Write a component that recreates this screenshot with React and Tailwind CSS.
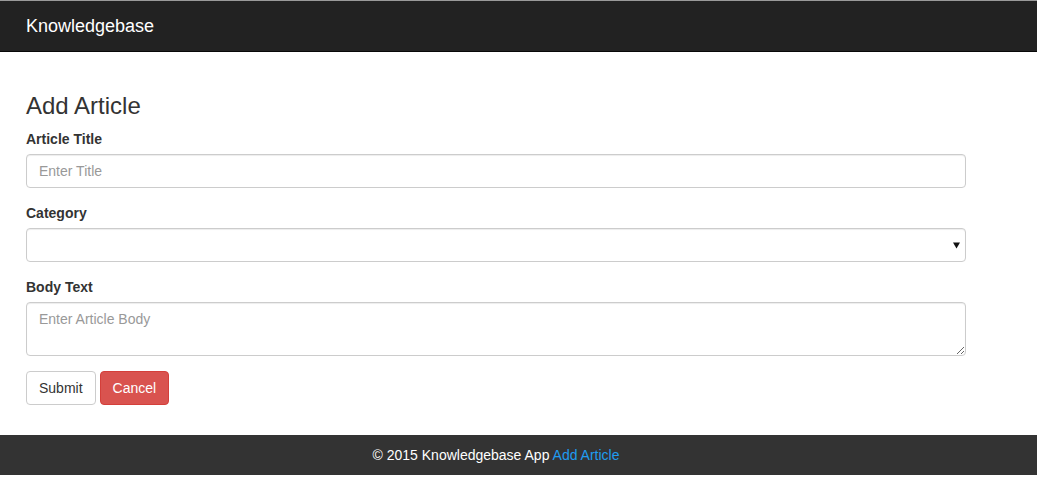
import React from 'react';

const font = { fontFamily: '"Liberation Sans", Arial, sans-serif' };

const FormGroup = ({ label, children }) => (
  <div className="mb-[15px]">
    <label className="block mb-[5px] text-[14px] leading-[20px] font-bold text-[#333]">{label}</label>
    {children}
  </div>
);

const inputClass =
  'block w-full h-[34px] px-[12px] py-[6px] text-[14px] leading-[20px] text-[#555] bg-white border border-[#ccc] rounded-[4px] shadow-[inset_0_1px_1px_rgba(0,0,0,0.075)] placeholder:text-[#999] outline-none';

export default function App() {
  return (
    <div className="min-h-[478px] bg-white text-[#333]" style={font}>
      {/* Navbar */}
      <nav className="bg-[#222] border-t border-t-[#9a9a9a] border-b border-b-[#080808]">
        <div className="mx-[26px] h-[50px] flex items-center">
          <span className="text-[18px] leading-[20px] text-white">Knowledgebase</span>
        </div>
      </nav>

      {/* Main */}
      <main className="w-[940px] ml-[26px] pt-[41px]">
        <h3 className="text-[24px] leading-[1.1] mb-[10px] font-normal text-[#333]">Add Article</h3>
        <form onSubmit={(e) => e.preventDefault()}>
          <FormGroup label="Article Title">
            <input type="text" placeholder="Enter Title" className={inputClass} />
          </FormGroup>
          <FormGroup label="Category">
            <div className="relative">
              <select className={inputClass + ' appearance-none pr-[28px]'} defaultValue="">
                <option value=""></option>
              </select>
              <svg className="absolute right-[5px] top-[14px] pointer-events-none" width="8" height="7" viewBox="0 0 8 7">
                <path d="M0 0.5 H7 L3.5 6.5 Z" fill="#111" />
              </svg>
            </div>
          </FormGroup>
          <FormGroup label="Body Text">
            <textarea
              rows={2}
              placeholder="Enter Article Body"
              className="block w-full h-[54px] px-[12px] py-[6px] text-[14px] leading-[20px] text-[#555] bg-white border border-[#ccc] rounded-[4px] shadow-[inset_0_1px_1px_rgba(0,0,0,0.075)] placeholder:text-[#999] outline-none"
            />
          </FormGroup>
          <div className="flex gap-[4px]">
            <button type="submit" className="h-[34px] px-[12px] text-[14px] leading-[20px] text-[#333] bg-white border border-[#ccc] rounded-[4px]">
              Submit
            </button>
            <button type="button" className="h-[34px] px-[12px] text-[14px] leading-[20px] text-white bg-[#d9534f] border border-[#d43f3a] rounded-[4px]">
              Cancel
            </button>
          </div>
        </form>
      </main>

      {/* Footer */}
      <footer className="mt-[30px] bg-[#333] h-[40px] flex items-center justify-center">
        <div className="w-[940px] ml-[26px] mr-auto text-center text-[14px] leading-[20px] text-white">
          © 2015 Knowledgebase App <a href="#" className="text-[#1f9cf0]">Add Article</a>
        </div>
      </footer>
    </div>
  );
}
